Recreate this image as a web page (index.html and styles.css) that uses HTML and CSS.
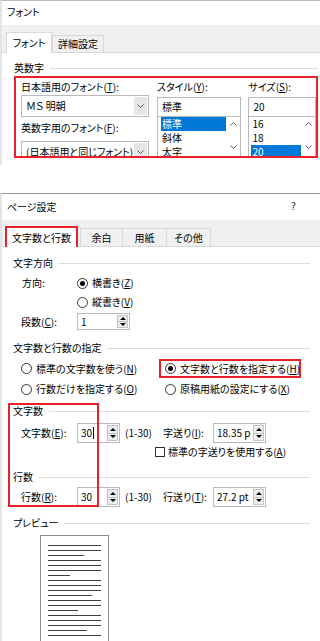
FILE: index.html
```html
<!DOCTYPE html>
<html lang="ja">
  <head>
    <meta charset="UTF-8" />
    <meta name="viewport" content="width=device-width, initial-scale=1.0" />
    <title>フォント / ページ設定</title>
    <link rel="stylesheet" href="styles.css">
  </head>
  <body>
    <div class="dialog dialog--font">
      <div class="dialog__title">フォント</div>
      <div class="tabs tabs--font">
        <div class="tab tab--active">フォント</div>
        <div class="tab">詳細設定</div>
      </div>
      <div class="panel panel--font">
        <div class="group">英数字</div>
        <div class="mark">
          <div class="font-col">
            <div class="label">日本語用のフォント(<u>T</u>):</div>
            <div class="combo">
              <span class="combo__val">ＭＳ 明朝</span>
              <span class="combo__btn"><svg width="7" height="4" viewBox="0 0 7 4"><polyline points="0.5,0.5 3.5,3.5 6.5,0.5" fill="none" stroke="#606060" stroke-width="1"/></svg></span>
            </div>
            <div class="label label--second">英数字用のフォント(<u>F</u>):</div>
            <div class="combo combo--second">
              <span class="combo__val">(日本語用と同じフォント)<i class="caret"></i></span>
              <span class="combo__btn"><svg width="7" height="4" viewBox="0 0 7 4"><polyline points="0.5,0.5 3.5,3.5 6.5,0.5" fill="none" stroke="#606060" stroke-width="1"/></svg></span>
            </div>
          </div>

          <div class="style-col">
            <div class="label">スタイル(<u>Y</u>):</div>
            <div class="field">標準</div>
            <div class="listbox">
              <ul class="listbox__items listbox__items--style">
                <li class="is-selected">標準</li>
                <li>斜体</li>
                <li>太字</li>
              </ul>
              <div class="listbox__bar">
                <svg width="7" height="4" viewBox="0 0 7 4"><polyline points="0.5,3.5 3.5,0.5 6.5,3.5" fill="none" stroke="#606060" stroke-width="1"/></svg>
                <svg width="7" height="4" viewBox="0 0 7 4"><polyline points="0.5,0.5 3.5,3.5 6.5,0.5" fill="none" stroke="#606060" stroke-width="1"/></svg>
              </div>
            </div>
          </div>

          <div class="size-col">
            <div class="label">サイズ(<u>S</u>):</div>
            <div class="field">20</div>
            <div class="listbox">
              <ul class="listbox__items listbox__items--size">
                <li>16</li>
                <li>18</li>
                <li class="is-selected">20</li>
              </ul>
              <div class="listbox__bar">
                <svg width="7" height="4" viewBox="0 0 7 4"><polyline points="0.5,3.5 3.5,0.5 6.5,3.5" fill="none" stroke="#606060" stroke-width="1"/></svg>
                <svg width="7" height="4" viewBox="0 0 7 4"><polyline points="0.5,0.5 3.5,3.5 6.5,0.5" fill="none" stroke="#606060" stroke-width="1"/></svg>
              </div>
            </div>
          </div>
        </div>
      </div>
    </div>

    <div class="dialog dialog--page">
      <div class="dialog__title">ページ設定<span class="dialog__help">?</span></div>
      <div class="tabs tabs--page">
        <div class="tab tab--active tab--marked">文字数と行数</div>
        <div class="tab tab--margin">余白</div>
        <div class="tab tab--paper">用紙</div>
        <div class="tab tab--other">その他</div>
      </div>
      <div class="panel panel--page">
        <div class="group group--dir">文字方向</div>
        <div class="row row--dir">
          <span class="row__label">方向:</span>
          <span class="radio is-on"></span><span>横書き(<u>Z</u>)</span>
        </div>
        <div class="row row--vert">
          <span class="radio"></span><span>縦書き(<u>V</u>)</span>
        </div>
        <div class="row row--cols">
          <span class="row__label">段数(<u>C</u>):</span>
          <span class="spin spin--cols"><span class="spin__val">1</span><span class="spin__btns"><i class="spin__up"></i><i class="spin__down"></i></span></span>
        </div>

        <div class="group group--grid">文字数と行数の指定</div>
        <div class="choices">
          <div class="choice"><span class="radio"></span><span>標準の文字数を使う(<u>N</u>)</span></div>
          <div class="choice choice--marked"><span class="radio is-on"></span><span>文字数と行数を指定する(<u>H</u>)</span></div>
          <div class="choice"><span class="radio"></span><span>行数だけを指定する(<u>O</u>)</span></div>
          <div class="choice choice--right"><span class="radio"></span><span>原稿用紙の設定にする(<u>X</u>)</span></div>
        </div>

        <div class="group group--chars">文字数</div>
        <div class="row row--field">
          <span class="row__label">文字数(<u>E</u>):</span>
          <span class="spin spin--num"><span class="spin__val">30<i class="caret"></i></span><span class="spin__btns"><i class="spin__up"></i><i class="spin__down"></i></span></span>
          <span class="range">(1-30)</span>
          <span class="row__label row__label--pitch">字送り(<u>I</u>):</span>
          <span class="spin spin--pitch"><span class="spin__val">18.35 p</span><span class="spin__btns"><i class="spin__up"></i><i class="spin__down"></i></span></span>
        </div>
        <div class="row row--check">
          <span class="check"></span><span>標準の字送りを使用する(<u>A</u>)</span>
        </div>

        <div class="group group--lines">行数</div>
        <div class="row row--field row--lines">
          <span class="row__label">行数(<u>R</u>):</span>
          <span class="spin spin--num"><span class="spin__val">30</span><span class="spin__btns"><i class="spin__up"></i><i class="spin__down"></i></span></span>
          <span class="range">(1-30)</span>
          <span class="row__label row__label--pitch">行送り(<u>T</u>):</span>
          <span class="spin spin--pitch"><span class="spin__val">27.2 pt</span><span class="spin__btns"><i class="spin__up"></i><i class="spin__down"></i></span></span>
        </div>

        <div class="group group--preview">プレビュー</div>
        <div class="preview">
          <svg width="70" height="110" viewBox="0 0 70 110">
            <rect x="0.5" y="0.5" width="68" height="108" fill="#fff" stroke="#8c8c8c"/>
            <g stroke="#404040" stroke-width="1">
              <line x1="8" y1="10.5" x2="61" y2="10.5"/>
              <line x1="8" y1="15.5" x2="61" y2="15.5"/>
              <line x1="8" y1="20.5" x2="44" y2="20.5"/>
              <line x1="8" y1="25.5" x2="61" y2="25.5"/>
              <line x1="8" y1="30.5" x2="61" y2="30.5"/>
              <line x1="8" y1="35.5" x2="61" y2="35.5"/>
              <line x1="8" y1="40.5" x2="30" y2="40.5"/>
              <line x1="8" y1="45.5" x2="61" y2="45.5"/>
              <line x1="8" y1="50.5" x2="61" y2="50.5"/>
              <line x1="8" y1="55.5" x2="61" y2="55.5"/>
              <line x1="8" y1="60.5" x2="52" y2="60.5"/>
              <line x1="8" y1="65.5" x2="61" y2="65.5"/>
              <line x1="8" y1="70.5" x2="61" y2="70.5"/>
              <line x1="8" y1="75.5" x2="38" y2="75.5"/>
              <line x1="8" y1="80.5" x2="61" y2="80.5"/>
              <line x1="8" y1="85.5" x2="61" y2="85.5"/>
              <line x1="8" y1="90.5" x2="61" y2="90.5"/>
              <line x1="8" y1="95.5" x2="47" y2="95.5"/>
              <line x1="8" y1="100.5" x2="61" y2="100.5"/>
            </g>
          </svg>
        </div>

        <div class="mark mark--counts"></div>
      </div>
    </div>
  </body>
</html>
```

FILE: styles.css
```css
* {
  margin: 0;
  padding: 0;
  box-sizing: border-box;
}

body {
  width: 320px;
  height: 641px;
  overflow: hidden;
  background: #fff;
  color: #000;
  font-family: "Noto Sans CJK JP", "Noto Sans", sans-serif;
  font-size: 10px;
  line-height: 14px;
  font-feature-settings: "palt";
}

u {
  text-decoration: underline;
  text-underline-offset: 1px;
}

ul {
  list-style: none;
}

/* dialogs */
.dialog {
  border-top: 1px solid #b9b9b9;
  border-left: 2px solid #e4e4e4;
}

.dialog__title {
  height: 24px;
  padding-left: 5px;
  line-height: 22px;
}

.dialog--page {
  margin-top: 28px;
  border-top-color: #9a9a9a;
}

.dialog--page .dialog__title {
  height: 26px;
  line-height: 26px;
  display: flex;
  justify-content: space-between;
  padding-right: 24px;
}

.dialog__help {
  font-family: "DejaVu Sans", sans-serif;
  font-size: 10px;
  color: #333;
}

/* tabs */
.tabs {
  display: flex;
  align-items: flex-end;
  background: #f0f0f0;
  border-bottom: 1px solid #dadada;
}

.tabs--font {
  height: 28px;
  padding-left: 4px;
}

.tabs--page {
  height: 27px;
  padding-left: 3px;
}

.tab {
  height: 17px;
  border: 1px solid #d9d9d9;
  border-bottom: none;
  text-align: center;
  line-height: 16px;
  background: #f0f0f0;
}

.tabs--font .tab {
  width: 52px;
}

.tabs--font .tab--active {
  width: 46px;
  height: 21px;
  margin-bottom: -1px;
  line-height: 20px;
  background: #fff;
}

.tabs--page .tab {
  height: 18px;
  line-height: 17px;
}

.tab--marked {
  width: 73px;
  height: 23px !important;
  margin-bottom: -3px;
  border: 2px solid #e8212b !important;
  background: #fff !important;
  line-height: 19px !important;
}

.tab--margin {
  width: 43px;
  margin-left: 2px;
}

.tab--paper {
  width: 45px;
  margin-left: -1px;
}

.tab--other {
  width: 45px;
  margin-left: -1px;
}

/* panels */
.panel {
  background: #fff;
}

.panel--font {
  padding: 8px 2px 7px 12px;
}

.panel--page {
  position: relative;
  padding: 9px 10px 0 11px;
}

.group {
  display: flex;
  align-items: center;
  height: 14px;
}

.group::after {
  content: "";
  flex: 1;
  height: 1px;
  margin-left: 6px;
  background: #dcdcdc;
}

.group--grid {
  margin-top: 11px;
}

.group--chars {
  margin-top: 7px;
}

.group--lines {
  margin-top: 11px;
}

.group--preview {
  margin-top: 9px;
}

/* red annotation boxes */
.mark {
  display: flex;
  width: 304px;
  height: 82px;
  margin-top: 1px;
  border: 2px solid #e8212b;
  overflow: hidden;
}

.mark--counts {
  position: absolute;
  left: 6px;
  top: 156px;
  width: 91px;
  height: 104px;
  margin: 0;
}

/* font dialog */
.label {
  height: 14px;
  margin-top: 2px;
  white-space: nowrap;
}

.label--second {
  margin-top: 4px;
}

.font-col {
  width: 128px;
  margin-left: 5px;
}

.combo {
  display: flex;
  height: 22px;
  margin-top: 1px;
  border: 1px solid #b9b9b9;
}

.combo--second {
  margin-top: 6px;
}

.combo__val {
  flex: 1;
  display: flex;
  align-items: center;
  padding-left: 4px;
  white-space: nowrap;
  overflow: hidden;
}

.combo__btn {
  display: flex;
  align-items: center;
  justify-content: center;
  width: 13px;
  margin: 1px;
  background: #e6e6e6;
}

.caret {
  display: inline-block;
  width: 1px;
  height: 12px;
  margin-left: 1px;
  background: #000;
}

.style-col {
  width: 85px;
  margin-left: 8px;
}

.size-col {
  width: 68px;
  margin-left: 7px;
}

.field {
  height: 20px;
  margin-top: 3px;
  padding-left: 4px;
  border: 1px solid #b9b9b9;
  line-height: 18px;
}

.listbox {
  display: flex;
  height: 42px;
  margin-top: -1px;
  border: 1px solid #b9b9b9;
  overflow: hidden;
}

.listbox__items {
  flex: 1;
}

.listbox__items li {
  height: 14px;
  padding-left: 1px;
  line-height: 14px;
}

.listbox__items--style {
  padding-left: 3px;
}

.listbox__items--size {
  padding-left: 2px;
}

.listbox__items li.is-selected {
  background: #0078d7;
  color: #fff;
}

.listbox__bar {
  display: flex;
  flex-direction: column;
  align-items: center;
  justify-content: space-between;
  width: 14px;
  padding: 5px 0 8px;
}

/* page setup dialog */
.row {
  display: flex;
  align-items: center;
  white-space: nowrap;
}

.row__label {
  width: 56px;
  margin-left: 8px;
}

.row--dir {
  height: 16px;
  margin-top: 5px;
}

.row--dir .row__label {
  width: 55px;
  margin-left: 9px;
}

.row--vert {
  height: 16px;
  margin-top: 3px;
  padding-left: 64px;
}

.row--cols {
  height: 17px;
  margin-top: 3px;
}

.radio {
  position: relative;
  flex: none;
  width: 11px;
  height: 11px;
  margin-right: 4px;
  border: 1px solid #333;
  border-radius: 50%;
  background: #fff;
}

.radio.is-on::after {
  content: "";
  position: absolute;
  left: 2px;
  top: 2px;
  width: 5px;
  height: 5px;
  border-radius: 50%;
  background: #000;
}

.choices {
  display: grid;
  grid-template-columns: 138px 142px;
  grid-template-rows: 19px 16px;
  row-gap: 3px;
  margin-top: 4px;
  margin-left: 8px;
  white-space: nowrap;
}

.choice {
  display: flex;
  align-items: center;
}

.choice--marked {
  padding-left: 4px;
  border: 2px solid #e8212b;
}

.choice--right {
  padding-left: 6px;
}

.spin {
  display: flex;
  height: 20px;
  border: 1px solid #b9b9b9;
  background: #fff;
}

.spin__val {
  flex: 1;
  display: flex;
  align-items: center;
  padding-left: 3px;
}

.spin__btns {
  display: flex;
  flex-direction: column;
  width: 11px;
  margin: 1px;
  border: 1px solid #c4c4c4;
}

.spin__up,
.spin__down {
  flex: 1;
  display: flex;
  align-items: center;
  justify-content: center;
  background: #ececec;
}

.spin__up {
  border-bottom: 1px solid #c4c4c4;
}

.spin__up::after,
.spin__down::after {
  content: "";
  border-left: 3px solid transparent;
  border-right: 3px solid transparent;
}

.spin__up::after {
  border-bottom: 3px solid #000;
}

.spin__down::after {
  border-top: 3px solid #000;
}

.spin--cols {
  width: 53px;
  height: 17px;
}

.spin--num {
  width: 43px;
}

.spin--pitch {
  width: 53px;
}

.row--field {
  height: 20px;
  margin-top: 5px;
}

.row--lines {
  margin-top: 3px;
}

.range {
  width: 38px;
  margin-left: 5px;
}

.row__label--pitch {
  width: 50px;
  margin-left: 0;
}

.row--check {
  height: 14px;
  margin-top: 2px;
  padding-left: 142px;
}

.check {
  width: 10px;
  height: 10px;
  margin-right: 3px;
  border: 1px solid #333;
}

.preview {
  margin-top: 5px;
  margin-left: 27px;
  line-height: 0;
}
```
